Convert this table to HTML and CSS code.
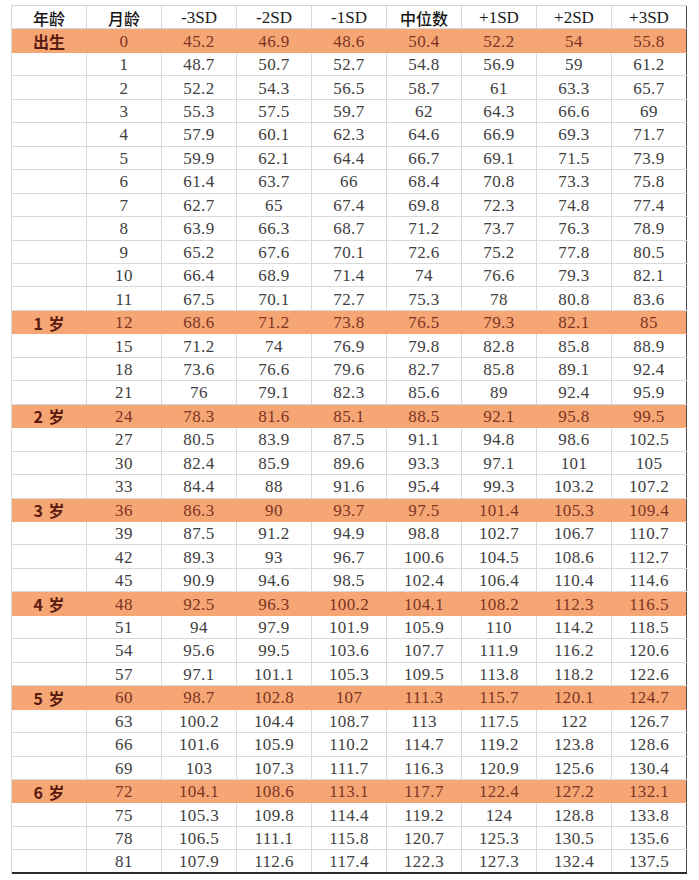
FILE: index.html
```html
<!DOCTYPE html>
<html lang="zh-CN">
<head>
<meta charset="utf-8">
<title>身高标准表</title>
<link rel="stylesheet" href="styles.css">
</head>
<body>
<div class="sheet">
  <div class="row head"><div class="c cjk">年龄</div><div class="c cjk">月龄</div><div class="c">-3SD</div><div class="c">-2SD</div><div class="c">-1SD</div><div class="c cjk">中位数</div><div class="c">+1SD</div><div class="c">+2SD</div><div class="c">+3SD</div></div>
  <div class="row hl"><div class="c age">出生</div><div class="c">0</div><div class="c">45.2</div><div class="c">46.9</div><div class="c">48.6</div><div class="c">50.4</div><div class="c">52.2</div><div class="c">54</div><div class="c">55.8</div></div>
  <div class="row"><div class="c"></div><div class="c">1</div><div class="c">48.7</div><div class="c">50.7</div><div class="c">52.7</div><div class="c">54.8</div><div class="c">56.9</div><div class="c">59</div><div class="c">61.2</div></div>
  <div class="row"><div class="c"></div><div class="c">2</div><div class="c">52.2</div><div class="c">54.3</div><div class="c">56.5</div><div class="c">58.7</div><div class="c">61</div><div class="c">63.3</div><div class="c">65.7</div></div>
  <div class="row"><div class="c"></div><div class="c">3</div><div class="c">55.3</div><div class="c">57.5</div><div class="c">59.7</div><div class="c">62</div><div class="c">64.3</div><div class="c">66.6</div><div class="c">69</div></div>
  <div class="row"><div class="c"></div><div class="c">4</div><div class="c">57.9</div><div class="c">60.1</div><div class="c">62.3</div><div class="c">64.6</div><div class="c">66.9</div><div class="c">69.3</div><div class="c">71.7</div></div>
  <div class="row"><div class="c"></div><div class="c">5</div><div class="c">59.9</div><div class="c">62.1</div><div class="c">64.4</div><div class="c">66.7</div><div class="c">69.1</div><div class="c">71.5</div><div class="c">73.9</div></div>
  <div class="row"><div class="c"></div><div class="c">6</div><div class="c">61.4</div><div class="c">63.7</div><div class="c">66</div><div class="c">68.4</div><div class="c">70.8</div><div class="c">73.3</div><div class="c">75.8</div></div>
  <div class="row"><div class="c"></div><div class="c">7</div><div class="c">62.7</div><div class="c">65</div><div class="c">67.4</div><div class="c">69.8</div><div class="c">72.3</div><div class="c">74.8</div><div class="c">77.4</div></div>
  <div class="row"><div class="c"></div><div class="c">8</div><div class="c">63.9</div><div class="c">66.3</div><div class="c">68.7</div><div class="c">71.2</div><div class="c">73.7</div><div class="c">76.3</div><div class="c">78.9</div></div>
  <div class="row"><div class="c"></div><div class="c">9</div><div class="c">65.2</div><div class="c">67.6</div><div class="c">70.1</div><div class="c">72.6</div><div class="c">75.2</div><div class="c">77.8</div><div class="c">80.5</div></div>
  <div class="row"><div class="c"></div><div class="c">10</div><div class="c">66.4</div><div class="c">68.9</div><div class="c">71.4</div><div class="c">74</div><div class="c">76.6</div><div class="c">79.3</div><div class="c">82.1</div></div>
  <div class="row"><div class="c"></div><div class="c">11</div><div class="c">67.5</div><div class="c">70.1</div><div class="c">72.7</div><div class="c">75.3</div><div class="c">78</div><div class="c">80.8</div><div class="c">83.6</div></div>
  <div class="row hl"><div class="c age">1 岁</div><div class="c">12</div><div class="c">68.6</div><div class="c">71.2</div><div class="c">73.8</div><div class="c">76.5</div><div class="c">79.3</div><div class="c">82.1</div><div class="c">85</div></div>
  <div class="row"><div class="c"></div><div class="c">15</div><div class="c">71.2</div><div class="c">74</div><div class="c">76.9</div><div class="c">79.8</div><div class="c">82.8</div><div class="c">85.8</div><div class="c">88.9</div></div>
  <div class="row"><div class="c"></div><div class="c">18</div><div class="c">73.6</div><div class="c">76.6</div><div class="c">79.6</div><div class="c">82.7</div><div class="c">85.8</div><div class="c">89.1</div><div class="c">92.4</div></div>
  <div class="row"><div class="c"></div><div class="c">21</div><div class="c">76</div><div class="c">79.1</div><div class="c">82.3</div><div class="c">85.6</div><div class="c">89</div><div class="c">92.4</div><div class="c">95.9</div></div>
  <div class="row hl"><div class="c age">2 岁</div><div class="c">24</div><div class="c">78.3</div><div class="c">81.6</div><div class="c">85.1</div><div class="c">88.5</div><div class="c">92.1</div><div class="c">95.8</div><div class="c">99.5</div></div>
  <div class="row"><div class="c"></div><div class="c">27</div><div class="c">80.5</div><div class="c">83.9</div><div class="c">87.5</div><div class="c">91.1</div><div class="c">94.8</div><div class="c">98.6</div><div class="c">102.5</div></div>
  <div class="row"><div class="c"></div><div class="c">30</div><div class="c">82.4</div><div class="c">85.9</div><div class="c">89.6</div><div class="c">93.3</div><div class="c">97.1</div><div class="c">101</div><div class="c">105</div></div>
  <div class="row"><div class="c"></div><div class="c">33</div><div class="c">84.4</div><div class="c">88</div><div class="c">91.6</div><div class="c">95.4</div><div class="c">99.3</div><div class="c">103.2</div><div class="c">107.2</div></div>
  <div class="row hl"><div class="c age">3 岁</div><div class="c">36</div><div class="c">86.3</div><div class="c">90</div><div class="c">93.7</div><div class="c">97.5</div><div class="c">101.4</div><div class="c">105.3</div><div class="c">109.4</div></div>
  <div class="row"><div class="c"></div><div class="c">39</div><div class="c">87.5</div><div class="c">91.2</div><div class="c">94.9</div><div class="c">98.8</div><div class="c">102.7</div><div class="c">106.7</div><div class="c">110.7</div></div>
  <div class="row"><div class="c"></div><div class="c">42</div><div class="c">89.3</div><div class="c">93</div><div class="c">96.7</div><div class="c">100.6</div><div class="c">104.5</div><div class="c">108.6</div><div class="c">112.7</div></div>
  <div class="row"><div class="c"></div><div class="c">45</div><div class="c">90.9</div><div class="c">94.6</div><div class="c">98.5</div><div class="c">102.4</div><div class="c">106.4</div><div class="c">110.4</div><div class="c">114.6</div></div>
  <div class="row hl"><div class="c age">4 岁</div><div class="c">48</div><div class="c">92.5</div><div class="c">96.3</div><div class="c">100.2</div><div class="c">104.1</div><div class="c">108.2</div><div class="c">112.3</div><div class="c">116.5</div></div>
  <div class="row"><div class="c"></div><div class="c">51</div><div class="c">94</div><div class="c">97.9</div><div class="c">101.9</div><div class="c">105.9</div><div class="c">110</div><div class="c">114.2</div><div class="c">118.5</div></div>
  <div class="row"><div class="c"></div><div class="c">54</div><div class="c">95.6</div><div class="c">99.5</div><div class="c">103.6</div><div class="c">107.7</div><div class="c">111.9</div><div class="c">116.2</div><div class="c">120.6</div></div>
  <div class="row"><div class="c"></div><div class="c">57</div><div class="c">97.1</div><div class="c">101.1</div><div class="c">105.3</div><div class="c">109.5</div><div class="c">113.8</div><div class="c">118.2</div><div class="c">122.6</div></div>
  <div class="row hl"><div class="c age">5 岁</div><div class="c">60</div><div class="c">98.7</div><div class="c">102.8</div><div class="c">107</div><div class="c">111.3</div><div class="c">115.7</div><div class="c">120.1</div><div class="c">124.7</div></div>
  <div class="row"><div class="c"></div><div class="c">63</div><div class="c">100.2</div><div class="c">104.4</div><div class="c">108.7</div><div class="c">113</div><div class="c">117.5</div><div class="c">122</div><div class="c">126.7</div></div>
  <div class="row"><div class="c"></div><div class="c">66</div><div class="c">101.6</div><div class="c">105.9</div><div class="c">110.2</div><div class="c">114.7</div><div class="c">119.2</div><div class="c">123.8</div><div class="c">128.6</div></div>
  <div class="row"><div class="c"></div><div class="c">69</div><div class="c">103</div><div class="c">107.3</div><div class="c">111.7</div><div class="c">116.3</div><div class="c">120.9</div><div class="c">125.6</div><div class="c">130.4</div></div>
  <div class="row hl"><div class="c age">6 岁</div><div class="c">72</div><div class="c">104.1</div><div class="c">108.6</div><div class="c">113.1</div><div class="c">117.7</div><div class="c">122.4</div><div class="c">127.2</div><div class="c">132.1</div></div>
  <div class="row"><div class="c"></div><div class="c">75</div><div class="c">105.3</div><div class="c">109.8</div><div class="c">114.4</div><div class="c">119.2</div><div class="c">124</div><div class="c">128.8</div><div class="c">133.8</div></div>
  <div class="row"><div class="c"></div><div class="c">78</div><div class="c">106.5</div><div class="c">111.1</div><div class="c">115.8</div><div class="c">120.7</div><div class="c">125.3</div><div class="c">130.5</div><div class="c">135.6</div></div>
  <div class="row last"><div class="c"></div><div class="c">81</div><div class="c">107.9</div><div class="c">112.6</div><div class="c">117.4</div><div class="c">122.3</div><div class="c">127.3</div><div class="c">132.4</div><div class="c">137.5</div></div>
</div>
</body>
</html>
```

FILE: styles.css
```css
* { box-sizing: border-box; }

body {
  margin: 0;
  background: #ffffff;
  color: #404040;
}

.sheet {
  margin: 5px 0 0 11px;
  width: 676px;
  border-top: 1px solid #d6d6d6;
  border-left: 1px solid #d6d6d6;
  display: flex;
  flex-direction: column;
}

.row {
  display: grid;
  grid-template-columns: repeat(9, 75px);
  height: 23.46px;
  border-bottom: 1px solid #d9d9d9;
}

.c {
  display: flex;
  align-items: center;
  justify-content: center;
  border-right: 1px solid #d9d9d9;
  font-family: "Liberation Serif", "Times New Roman", serif;
  font-size: 17px;
  letter-spacing: 0.4px;
  line-height: 1;
  padding-top: 1px;
  white-space: nowrap;
}

.c:last-child {
  border-right-color: #4a4a4a;
}

.head .c {
  color: #1a1a1a;
  letter-spacing: 0;
}

.head .cjk {
  font-family: "Noto Sans CJK SC", sans-serif;
  font-size: 16px;
  font-weight: 500;
  color: #151515;
}

.hl {
  background: #f6a674;
  border-bottom-color: #f6a674;
}

.hl .c {
  color: #7c3424;
  border-right-color: transparent;
}

.hl .c:last-child {
  border-right-color: #4a4a4a;
}

.age {
  font-family: "Noto Sans CJK SC", sans-serif;
  font-size: 16px;
  font-weight: 700;
  word-spacing: 2px;
  letter-spacing: 0;
}

.hl .age {
  color: #5a1a10;
}

.last {
  border-bottom: 2px solid #2a2a2a;
}
```
